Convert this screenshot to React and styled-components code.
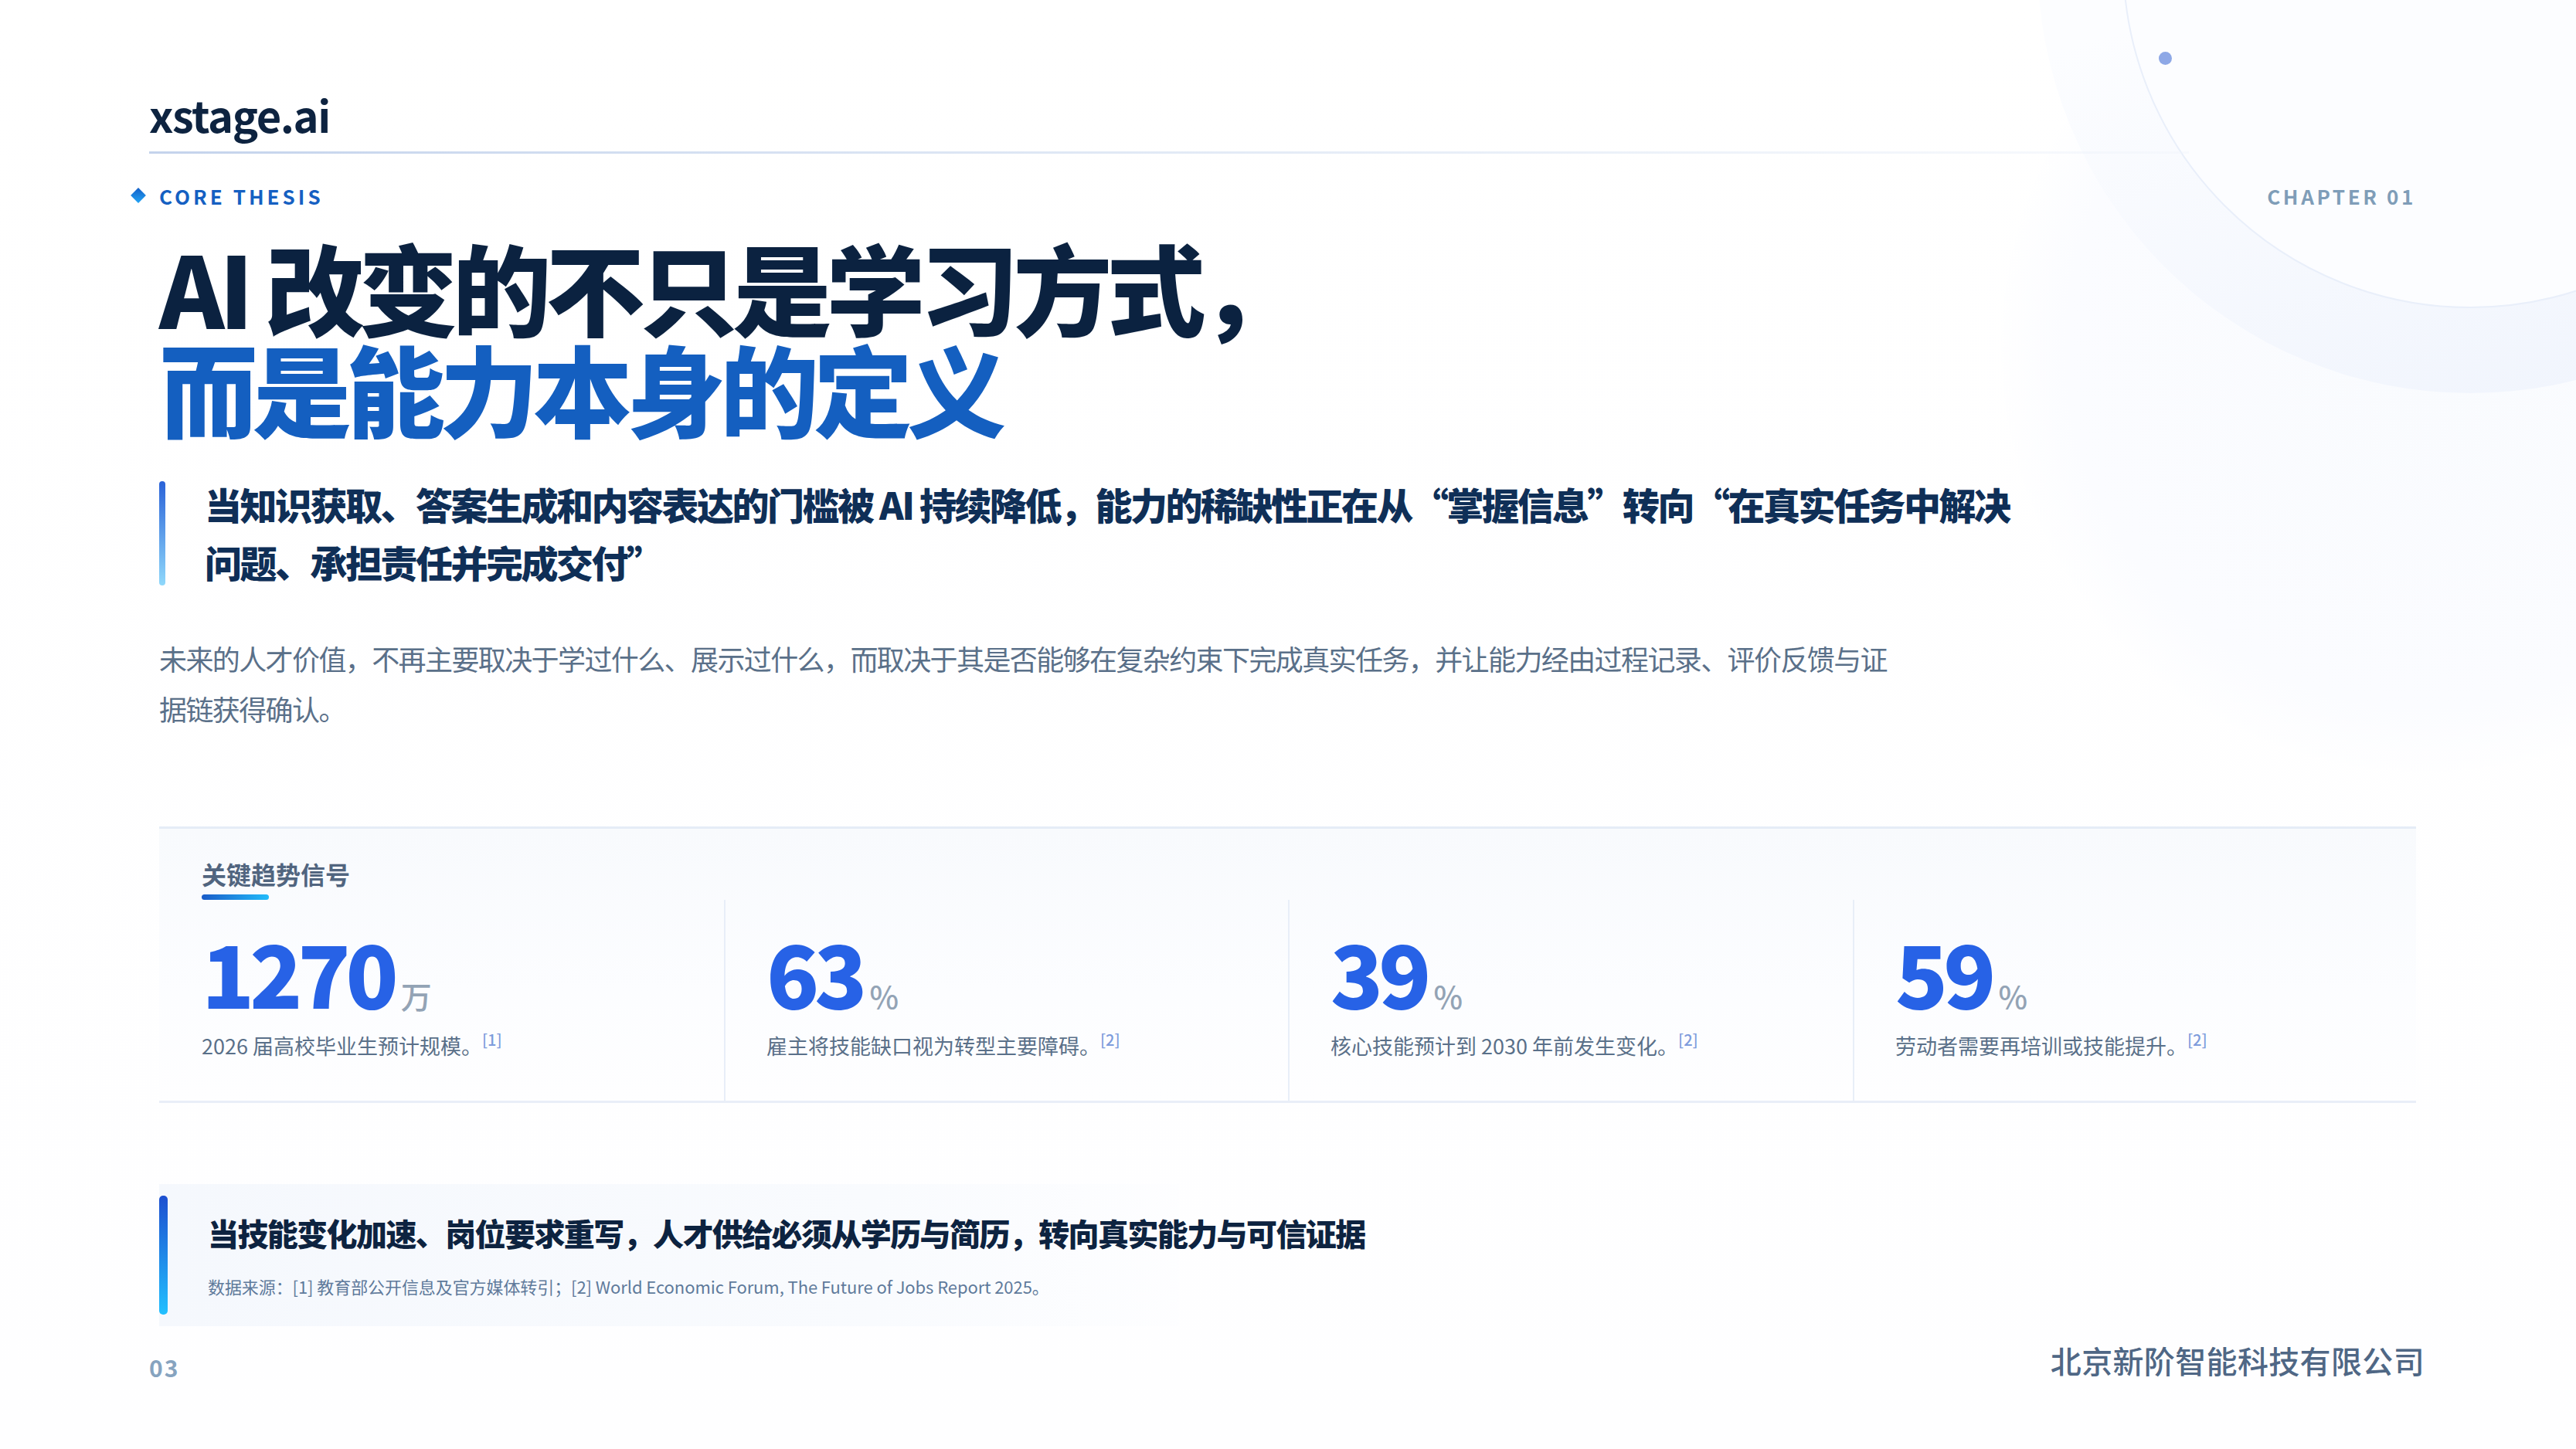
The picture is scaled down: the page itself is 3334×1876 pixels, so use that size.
import React from 'react';
import styled, { createGlobalStyle } from 'styled-components';

const GlobalStyle = createGlobalStyle`
    html, body {
        margin: 0;
        padding: 0;
        background: #fff;
    }
    * {
        box-sizing: border-box;
    }
`

const Page = styled.div`
    position: relative;
    width: 3334px;
    height: 1876px;
    overflow: hidden;
    padding: 0 207px 0 193px;
    background: linear-gradient(180deg, #ffffff 0%, #fefeff 100%);
    font-family: "Noto Sans CJK SC", "Noto Sans", sans-serif;
`

const Glow = styled.div`
    position: absolute;
    left: 2590px;
    top: -100px;
    width: 1100px;
    height: 1100px;
    border-radius: 50%;
    background: radial-gradient(circle, #f9fbfe 0%, #fbfcff 60%, rgba(255,255,255,0) 72%);
`

const OuterRing = styled.div`
    position: absolute;
    left: 2637px;
    top: -611px;
    width: 1120px;
    height: 1120px;
    border-radius: 50%;
    background: linear-gradient(165deg, #fcfdff 48%, #f1f5fd 92%);
`

const InnerRing = styled.div`
    position: absolute;
    left: 2747px;
    top: -501px;
    width: 900px;
    height: 900px;
    border-radius: 50%;
    border: 2px solid #e9effa;
    background: #fcfdff;
`

const Dot = styled.div`
    position: absolute;
    left: 2794px;
    top: 67px;
    width: 17px;
    height: 17px;
    border-radius: 50%;
    background: #8ea8e6;
`

const Content = styled.div`
    position: relative;
    display: flex;
    flex-direction: column;
    height: 100%;
`

const Logo = styled.div`
    height: 196px;
    padding-top: 110px;
    font-size: 56px;
    line-height: 76px;
    font-weight: 700;
    letter-spacing: -1.4px;
    color: #0d2340;
`

const HeaderLine = styled.div`
    width: 2640px;
    height: 3px;
    background: linear-gradient(90deg, #c4d3ec 0%, #e2eaf6 50%, rgba(240,244,251,0.4) 100%);
`

const EyebrowRow = styled.div`
    display: flex;
    align-items: center;
    justify-content: space-between;
    margin-top: 39px;
    height: 30px;
`

const Eyebrow = styled.div`
    display: flex;
    align-items: center;
    gap: 20px;
    margin-left: -21px;
    font-size: 26px;
    font-weight: 700;
    letter-spacing: 4px;
    color: #1560c2;
`

const Diamond = styled.span`
    display: block;
    width: 14px;
    height: 14px;
    transform: rotate(45deg);
    background: linear-gradient(135deg, #1560c8, #22a4f5);
`

const Chapter = styled.div`
    font-size: 26px;
    font-weight: 700;
    letter-spacing: 3.6px;
    color: #7f9db8;
`

const Main = styled.div`
    padding-left: 13px;
`

const Title = styled.h1`
    margin: 37px 0 0;
    font-size: 128px;
    line-height: 131px;
    font-weight: 900;
    letter-spacing: -7px;
    color: #0b2240;
`

const TitleAccent = styled.span`
    display: block;
    color: #145fc0;
`

const Thesis = styled.div`
    display: flex;
    align-items: center;
    gap: 51px;
    margin-top: 48px;
`

const ThesisBar = styled.div`
    flex: none;
    width: 8px;
    height: 135px;
    border-radius: 4px;
    background: linear-gradient(180deg, #2a62d8 0%, #8fd8fb 100%);
`

const ThesisText = styled.p`
    margin: 0;
    width: 2360px;
    font-size: 48px;
    line-height: 75px;
    font-weight: 900;
    letter-spacing: -2.5px;
    color: #0f2f57;
`

const Body = styled.p`
    margin: 55px 0 0;
    width: 2260px;
    font-size: 36px;
    line-height: 65px;
    font-weight: 400;
    letter-spacing: -1.6px;
    color: #5a7089;
`

const Panel = styled.section`
    margin-top: 120px;
    height: 358px;
    display: flex;
    flex-direction: column;
    border-top: 3px solid #e5ecf7;
    border-bottom: 3px solid #e9eef8;
    background: linear-gradient(180deg, #f8fafd 0%, #fcfdff 60%, #fefeff 100%);
`

const PanelHead = styled.div`
    padding: 36px 0 0 55px;
    height: 92px;
`

const PanelTitle = styled.div`
    font-size: 32px;
    line-height: 44px;
    font-weight: 700;
    color: #51657f;
`

const PanelUnderline = styled.div`
    width: 87px;
    height: 7px;
    margin-top: 5px;
    border-radius: 4px;
    background: linear-gradient(90deg, #1a5cc8, #22bcfa);
`

const StatGrid = styled.div`
    flex: 1;
    display: grid;
    grid-template-columns: 733px 730px 731px 1fr;
`

const Stat = styled.div`
    padding: 34px 0 0 ${({first}) => first ? 55 : 53}px;
    border-right: ${({last}) => last ? 'none' : '2px solid #e8eef8'};
`

const StatValue = styled.div`
    display: flex;
    align-items: baseline;
    gap: 9px;
    height: 116px;
    line-height: 116px;
`

const StatNumber = styled.span`
    font-size: 112px;
    font-weight: 900;
    letter-spacing: -6px;
    color: #2762e6;
`

const StatUnit = styled.span`
    font-size: 40px;
    font-weight: 500;
    color: #93a3b5;
`

const StatLabel = styled.div`
    margin-top: 20px;
    font-size: 27px;
    line-height: 38px;
    color: #5a7089;
`

const Ref = styled.sup`
    margin-left: 0;
    font-size: 20px;
    font-weight: 500;
    line-height: 0;
    vertical-align: 11px;
    color: #7e9cdc;
`

const Callout = styled.section`
    position: relative;
    margin-top: 105px;
    width: 1320px;
    height: 184px;
    padding: 38px 0 0 63px;
    background: linear-gradient(90deg, #f5f8fd 0%, #f9fbfe 70%, rgba(252,253,255,0.4) 100%);
`

const CalloutBar = styled.div`
    position: absolute;
    left: 0;
    top: 15px;
    width: 11px;
    height: 154px;
    border-radius: 5px;
    background: linear-gradient(180deg, #1d4fd0 0%, #22c0ff 100%);
`

const CalloutTitle = styled.div`
    font-size: 40px;
    line-height: 50px;
    font-weight: 900;
    letter-spacing: -1.6px;
    white-space: nowrap;
    color: #0d2340;
`

const CalloutSource = styled.div`
    margin-top: 28px;
    font-size: 22px;
    line-height: 32px;
    letter-spacing: -0.08px;
    white-space: nowrap;
    color: #5f7a9b;
`

const Footer = styled.footer`
    display: flex;
    justify-content: space-between;
    align-items: flex-start;
    margin-top: 20px;
    margin-right: -11px;
`

const PageNumber = styled.div`
    margin-top: 13px;
    font-size: 30px;
    line-height: 40px;
    font-weight: 700;
    letter-spacing: 2px;
    color: #86a3bf;
`

const Company = styled.div`
    font-size: 40px;
    line-height: 48px;
    font-weight: 500;
    letter-spacing: 0.35px;
    color: #4f6785;
`

const stats = [
    { number: '1270', unit: '万', label: '2026 届高校毕业生预计规模。', ref: '[1]' },
    { number: '63', unit: '%', label: '雇主将技能缺口视为转型主要障碍。', ref: '[2]' },
    { number: '39', unit: '%', label: '核心技能预计到 2030 年前发生变化。', ref: '[2]' },
    { number: '59', unit: '%', label: '劳动者需要再培训或技能提升。', ref: '[2]' },
];

const App = () => {
    return (
        <Page>
            <GlobalStyle/>
            <Glow/>
            <OuterRing/>
            <InnerRing/>
            <Dot/>
            <Content>
                <Logo>xstage.ai</Logo>
                <HeaderLine/>
                <EyebrowRow>
                    <Eyebrow><Diamond/>CORE THESIS</Eyebrow>
                    <Chapter>CHAPTER 01</Chapter>
                </EyebrowRow>
                <Main>
                    <Title>
                        AI 改变的不只是学习方式，
                        <TitleAccent>而是能力本身的定义</TitleAccent>
                    </Title>
                    <Thesis>
                        <ThesisBar/>
                        <ThesisText>当知识获取、答案生成和内容表达的门槛被 AI 持续降低，能力的稀缺性正在从“掌握信息”转向“在真实任务中解决问题、承担责任并完成交付”</ThesisText>
                    </Thesis>
                    <Body>未来的人才价值，不再主要取决于学过什么、展示过什么，而取决于其是否能够在复杂约束下完成真实任务，并让能力经由过程记录、评价反馈与证据链获得确认。</Body>
                    <Panel>
                        <PanelHead>
                            <PanelTitle>关键趋势信号</PanelTitle>
                            <PanelUnderline/>
                        </PanelHead>
                        <StatGrid>
                            {stats.map((stat, i) => (
                                <Stat key={stat.number} first={i === 0} last={i === stats.length - 1}>
                                    <StatValue>
                                        <StatNumber>{stat.number}</StatNumber>
                                        <StatUnit>{stat.unit}</StatUnit>
                                    </StatValue>
                                    <StatLabel>{stat.label}<Ref>{stat.ref}</Ref></StatLabel>
                                </Stat>
                            ))}
                        </StatGrid>
                    </Panel>
                    <Callout>
                        <CalloutBar/>
                        <CalloutTitle>当技能变化加速、岗位要求重写，人才供给必须从学历与简历，转向真实能力与可信证据</CalloutTitle>
                        <CalloutSource>数据来源：[1] 教育部公开信息及官方媒体转引；[2] World Economic Forum, The Future of Jobs Report 2025。</CalloutSource>
                    </Callout>
                </Main>
                <Footer>
                    <PageNumber>03</PageNumber>
                    <Company>北京新阶智能科技有限公司</Company>
                </Footer>
            </Content>
        </Page>
    )
}

export default App;
